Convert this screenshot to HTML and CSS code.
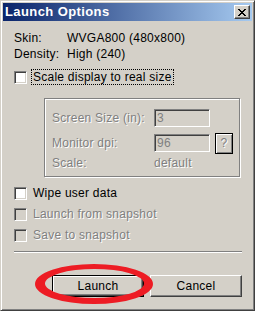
FILE: index.html
```html
<!DOCTYPE html>
<html lang="en">
<head>
    <meta charset="UTF-8">
    <link rel="stylesheet" href="styles.css">
    <title>Launch Options</title>
</head>
<body>
    <div class="window">
        <div class="titlebar">
            <span class="title">Launch Options</span>
            <span class="close">
                <svg width="8" height="7" viewBox="0 0 8 7" shape-rendering="crispEdges">
                    <path d="M0 0h2v1h-2zM6 0h2v1h-2zM1 1h2v1h-2zM5 1h2v1h-2zM2 2h4v1h-4zM3 3h2v1h-2zM2 4h4v1h-4zM1 5h2v1h-2zM5 5h2v1h-2zM0 6h2v1h-2zM6 6h2v1h-2z" fill="#000"/>
                </svg>
            </span>
        </div>
        <div class="content">
            <div class="info"><span class="key">Skin:</span><span>WVGA800 (480x800)</span></div>
            <div class="info"><span class="key">Density:</span><span>High (240)</span></div>

            <div class="check scale-check">
                <span class="box"></span>
                <span class="focus">Scale display to real size</span>
            </div>

            <div class="group">
                <div class="field">
                    <span class="flabel">Screen Size (in):</span>
                    <span class="input">3</span>
                </div>
                <div class="field">
                    <span class="flabel">Monitor dpi:</span>
                    <span class="input">96</span>
                    <span class="help">?</span>
                </div>
                <div class="field scale-row">
                    <span class="flabel">Scale:</span>
                    <span class="value">default</span>
                </div>
            </div>

            <div class="options">
                <div class="check"><span class="box"></span><span class="text">Wipe user data</span></div>
                <div class="check disabled"><span class="box"></span><span class="text">Launch from snapshot</span></div>
                <div class="check disabled"><span class="box"></span><span class="text">Save to snapshot</span></div>
            </div>

            <div class="sep"></div>

            <div class="buttons">
                <button class="btn default">Launch</button>
                <button class="btn">Cancel</button>
            </div>
        </div>
    </div>
    <!-- red marker drawn over the dialog -->
    <svg class="marker" width="255" height="311" viewBox="0 0 255 311">
        <path fill="#ed1c24" fill-rule="evenodd"
              d="M35 284a59 20 0 1 0 118 0a59 20 0 1 0 -118 0z
                 M45 283.5a49.5 14.5 0 1 0 99 0a49.5 14.5 0 1 0 -99 0z"/>
    </svg>
</body>
</html>
```

FILE: styles.css
```css
body {
    margin: 0;
    position: relative;
    font-family: "Liberation Sans", Arial, sans-serif;
    font-size: 12px;
    letter-spacing: 0.25px;
    color: #000;
}
.window {
    width: 255px;
    height: 311px;
    box-sizing: border-box;
    background: #d4d0c8;
    border: 1px solid;
    border-color: #d4d0c8 #404040 #404040 #d4d0c8;
    box-shadow: inset 1px 1px 0 #fff, inset -1px -1px 0 #808080;
    padding: 2px;
    display: flex;
    flex-direction: column;
}
/* title bar */
.titlebar {
    height: 18px;
    display: flex;
    align-items: center;
    justify-content: space-between;
    padding: 0 2px;
    background: linear-gradient(to right, #0a246a, #a6caf0);
}
.title {
    color: #fff;
    font-weight: bold;
    font-size: 13px;
    line-height: 18px;
    letter-spacing: 0.4px;
}
.close {
    width: 16px;
    height: 14px;
    box-sizing: border-box;
    background: #d4d0c8;
    border: 1px solid;
    border-color: #fff #404040 #404040 #fff;
    box-shadow: inset -1px -1px 0 #808080;
    display: flex;
    align-items: center;
    justify-content: center;
}
.close svg {
    display: block;
}
/* body */
.content {
    flex: 1;
    display: flex;
    flex-direction: column;
    padding: 9px 10px 0 11px;
}
.info {
    display: flex;
    line-height: 16px;
}
.key {
    width: 53px;
}
.check {
    display: flex;
    align-items: center;
    height: 13px;
}
.box {
    width: 13px;
    height: 13px;
    box-sizing: border-box;
    background: #fff;
    border: 1px solid;
    border-color: #808080 #fff #fff #808080;
    box-shadow: inset 1px 1px 0 #404040, inset -1px -1px 0 #d4d0c8;
    flex: none;
}
.check .text {
    margin-left: 6px;
    line-height: 14px;
    padding-bottom: 2px;
}
.scale-check {
    height: 16px;
    margin-top: 7px;
}
.focus {
    margin-left: 4px;
    border: 1px dotted #000;
    padding: 0 1px;
    line-height: 14px;
}
.disabled .box {
    background: #d4d0c8;
}
.disabled .text,
.group .flabel,
.group .value,
.help {
    color: #808080;
    text-shadow: 1px 1px 0 #fff;
}
/* screen size group */
.group {
    margin: 13px 0 0 30px;
    width: 196px;
    box-sizing: border-box;
    border: 1px solid #808080;
    box-shadow: 1px 1px 0 #fff, inset 1px 1px 0 #fff;
    padding: 10px 0 6px 7px;
}
.field {
    display: flex;
    align-items: center;
    height: 18px;
}
.field + .field {
    margin-top: 7px;
}
.field.scale-row {
    height: 14px;
    margin-top: 4px;
    line-height: 14px;
}
.flabel {
    width: 102px;
}
.input {
    width: 56px;
    height: 18px;
    box-sizing: border-box;
    border: 1px solid;
    border-color: #808080 #fff #fff #808080;
    box-shadow: inset 1px 1px 0 #404040, inset -1px -1px 0 #d4d0c8;
    padding-left: 2px;
    line-height: 16px;
    color: #808080;
}
.help {
    width: 18px;
    height: 21px;
    margin-left: 5px;
    box-sizing: border-box;
    border: 1px solid #000;
    box-shadow: inset 1px 1px 0 #fff, inset -1px -1px 0 #808080;
    display: flex;
    align-items: center;
    justify-content: center;
}
.options {
    margin-top: 10px;
    display: flex;
    flex-direction: column;
    gap: 8px;
}
.sep {
    margin-top: 9px;
    border-top: 1px solid #808080;
    border-bottom: 1px solid #fff;
}
.buttons {
    margin-top: 22px;
    display: flex;
    justify-content: flex-end;
    gap: 6px;
}
.btn {
    width: 92px;
    height: 22px;
    box-sizing: border-box;
    padding: 0;
    background: #d4d0c8;
    font-family: inherit;
    font-size: 12px;
    letter-spacing: 0.25px;
    color: #000;
    border: 1px solid;
    border-color: #fff #404040 #404040 #fff;
    box-shadow: inset -1px -1px 0 #808080;
}
.btn.default {
    border-color: #000;
    box-shadow: inset 1px 1px 0 #fff, inset -1px -1px 0 #404040, inset -2px -2px 0 #808080;
}
.marker {
    position: absolute;
    left: 0;
    top: 0;
    pointer-events: none;
}
```
